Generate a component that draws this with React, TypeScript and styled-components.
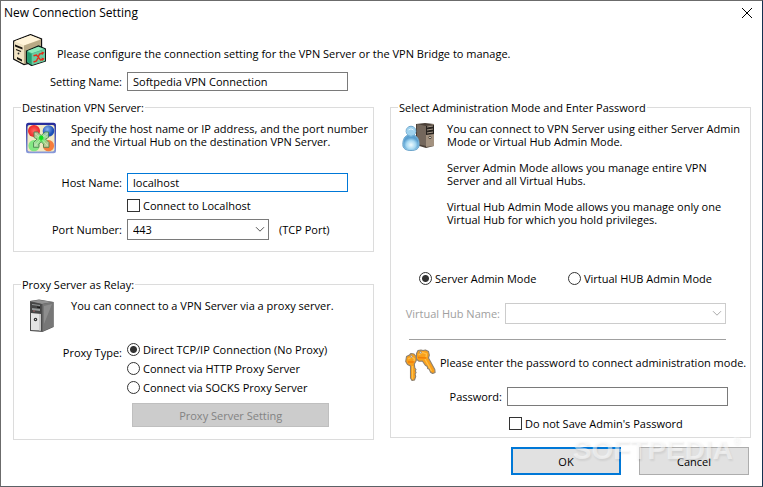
import React from "react";
import styled, { createGlobalStyle } from "styled-components";

const GlobalStyle = createGlobalStyle`
  *, *::before, *::after { box-sizing: border-box; }
  body { margin: 0; background: #fff; }
  body, input, select, button {
    font-family: "Open Sans", "Noto Sans", sans-serif;
    font-size: 11px;
    line-height: 13px;
    color: #000;
  }
`;

const Dialog = styled.main`
  display: flex;
  flex-direction: column;
  min-height: 100vh;
  background: #fff;
  border: 1px solid #6b6b6b;
  border-right-color: #14304f;
  border-bottom-color: #5c6166;
`;

const TitleBar = styled.header`
  display: flex;
  align-items: center;
  justify-content: space-between;
  height: 24px;
  padding: 0 9px 0 3px;
`;

const Title = styled.h1`
  margin: 0;
  font-size: 12px;
  line-height: 16px;
  font-weight: 400;
`;

const CloseButton = styled.button`
  display: flex;
  padding: 0;
  border: 0;
  background: none;
`;

const Intro = styled.div`
  display: flex;
  align-items: center;
  gap: 11px;
  height: 32px;
  margin: 9px 12px 0 12px;
  p { padding-top: 6px; }
`;

const Text = styled.p`
  margin: 0;
  white-space: pre-line;
`;

const FieldRow = styled.div<{ $label?: number; $top?: number; $right?: number }>`
  display: grid;
  grid-template-columns: ${(p) => p.$label ?? 108}px minmax(0, 1fr);
  column-gap: 5px;
  align-items: center;
  margin-top: ${(p) => p.$top ?? 0}px;
  padding-right: ${(p) => p.$right ?? 25}px;
`;

const FieldLabel = styled.label<{ $muted?: boolean }>`
  text-align: right;
  white-space: nowrap;
  color: ${(p) => (p.$muted ? "#a0a0a0" : "#000")};
`;

const TextBox = styled.input<{ $active?: boolean }>`
  width: 100%;
  height: 19px;
  padding: 0 5px;
  border: 1px solid ${(p) => (p.$active ? "#0078d7" : "#7a7a7a")};
  border-radius: 0;
  background: #fff;
  outline: none;
`;

const NameRow = styled(FieldRow)`
  width: 50%;
  margin-left: 13px;
`;

const Columns = styled.div`
  display: grid;
  grid-template-columns: minmax(0, 1fr) minmax(0, 1fr);
  gap: 16px;
  align-items: start;
  margin: 10px 11px 0 12px;
`;

const LeftColumn = styled.div`
  display: flex;
  flex-direction: column;
  gap: 26px;
`;

const Group = styled.fieldset<{ $bottom: number }>`
  min-width: 0;
  margin: 0;
  padding: 0 0 ${(p) => p.$bottom}px;
  border: 1px solid #dcdcdc;
`;

const Legend = styled.legend`
  margin-left: 7px;
  padding: 0 1px;
  line-height: 13px;
`;

const Description = styled.div<{ $height: number; $inset?: number }>`
  display: grid;
  grid-template-columns: 32px minmax(0, 1fr);
  column-gap: ${(p) => p.$inset ?? 13}px;
  min-height: ${(p) => p.$height}px;
  padding: 8px 0 0 11px;
`;

const Choice = styled.label`
  display: flex;
  align-items: center;
  gap: 3px;
  white-space: nowrap;
`;

const Tick = styled.input`
  appearance: none;
  flex: none;
  width: 13px;
  height: 13px;
  margin: 0;
  border: 1px solid #333;
  background: #fff;
`;

const Radio = styled(Tick)`
  border-radius: 50%;
  &:checked {
    background: radial-gradient(circle, #333 0 3px, #fff 4px);
  }
`;

const TickRow = styled.div<{ $indent: number; $top: number }>`
  display: flex;
  margin: ${(p) => p.$top}px 0 0 ${(p) => p.$indent}px;
`;

const PortLine = styled.div`
  display: flex;
  align-items: center;
  gap: 10px;
`;

const SelectFrame = styled.div<{ $wide?: boolean }>`
  position: relative;
  width: ${(p) => (p.$wide ? "100%" : "142px")};
  svg {
    position: absolute;
    right: 4px;
    top: 7px;
    pointer-events: none;
  }
`;

const Select = styled.select`
  display: block;
  appearance: none;
  width: 100%;
  height: 21px;
  padding: 0 20px 0 5px;
  border: 1px solid #7a7a7a;
  border-radius: 0;
  background: #fff;
  &:disabled {
    border-color: #ccc;
    opacity: 1;
  }
`;

const ProxyRow = styled(FieldRow)`
  align-items: start;
`;

const ProxyLabel = styled.span`
  padding-top: 3px;
  text-align: right;
`;

const RadioStack = styled.div`
  display: flex;
  flex-direction: column;
  gap: 6px;
`;

const SettingButton = styled.button`
  display: block;
  width: 55%;
  height: 24px;
  margin: 9px 0 0 118px;
  padding: 0;
  border: 1px solid #bfbfbf;
  background: #ccc;
  &:disabled { color: #838383; }
`;

const ModeRow = styled.div`
  display: grid;
  grid-template-columns: 149px auto;
  padding: 0 0 0 28px;
`;

const Divider = styled.hr`
  height: 1px;
  margin: 15px 24px 0 18px;
  border: 0;
  background: #a0a0a0;
`;

const KeyRow = styled.div`
  display: grid;
  grid-template-columns: 32px minmax(0, 1fr);
  column-gap: 3px;
  padding: 9px 0 0 14px;
  white-space: nowrap;
  p { padding-top: 7px; }
`;

const Footer = styled.footer`
  position: relative;
  display: flex;
  justify-content: flex-end;
  gap: 18px;
  margin-top: 7px;
  padding-right: 13px;
`;

const PushButton = styled.button<{ $primary?: boolean }>`
  width: 110px;
  height: 28px;
  padding: 0;
  border: ${(p) => (p.$primary ? "2px solid #0078d7" : "1px solid #adadad")};
  background: #e1e1e1;
`;

const Watermark = styled.span`
  position: absolute;
  right: 29px;
  top: -11px;
  font: 700 28px/28px "Liberation Sans", sans-serif;
  color: rgba(255, 255, 255, 0.5);
  text-shadow: 1px 2px 2px rgba(0, 0, 0, 0.07);
  pointer-events: none;
  sup {
    position: absolute;
    left: 100%;
    top: 0;
    font-size: 10px;
    line-height: 10px;
  }
`;

function Chevron({ color = "#555" }: { color?: string }) {
  return (
    <svg width="10" height="7" viewBox="0 0 10 7" fill="none" stroke={color} aria-hidden="true">
      <path d="M1 1.2 5 5.2 9 1.2" />
    </svg>
  );
}

function BridgeIcon() {
  return (
    <svg width="33" height="32" viewBox="0 0 33 32" aria-hidden="true">
      <path d="M.7 7 17.5.6 28.5 5v21L11 30.5.7 25Z" fill="#eee0bf" stroke="#111" strokeWidth="1.3" />
      <path d="M1.5 7.2 17.5 1.3 27.5 5.2 11 11.5Z" fill="#fff4d9" />
      <path d="M11 11.5 28 5.4V25L11 30Z" fill="#b9aa86" />
      <path d="M1.3 8 10.5 12v17.5L1.3 24.6Z" fill="#f2e5c5" />
      <path d="m2 10.5 7.5 3v2l-7.5-3ZM4 23l5 2.5v2L4 25Z" fill="#17130d" />
      <path d="m3 15.5 5 2" stroke="#17130d" strokeWidth="1.2" />
      <circle cx="5.5" cy="19.5" r=".9" fill="#222" />
      <path d="m13.5 17 12-5 7 3v12l-14 4.5-5-3Z" fill="#42b489" stroke="#101b17" strokeWidth="1.2" />
      <path d="m14.3 17 11-4.3 6 2.4-12.4 4.1Z" fill="#8deabb" />
      <path d="M19 19.5 32 15.5V27l-13 4Z" fill="#69cba0" />
      <path d="M14.3 18v9.8l4 2.5V20Z" fill="#249d70" />
      <path d="m20.5 21.8 3-.8 4 5 3-.8M20.5 28l3-1 3-7 3.5-.7" fill="none" stroke="#e52b18" strokeWidth="1.4" />
      <path d="m28.5 17.5 3 1-2.4 2.5ZM28.5 23.5l3 1-2.4 2.5Z" fill="#e52b18" />
    </svg>
  );
}

function HubIcon() {
  return (
    <svg width="32" height="32" viewBox="0 0 32 32" aria-hidden="true">
      <defs>
        <linearGradient id="hubEdge" x2="0" y2="1"><stop stopColor="#242999" /><stop offset="1" stopColor="#8a9bdb" /></linearGradient>
        <radialGradient id="hubRed"><stop stopColor="#ff6a64" /><stop offset="1" stopColor="#ee2427" /></radialGradient>
        <radialGradient id="hubBlue" cx=".4" cy=".35"><stop stopColor="#8ab4ee" /><stop offset="1" stopColor="#1c50b8" /></radialGradient>
        <radialGradient id="hubGreen"><stop stopColor="#14e020" /><stop offset=".45" stopColor="#7bdc7b" /><stop offset="1" stopColor="#b9dcae" /></radialGradient>
      </defs>
      <rect x="1" y=".7" width="30" height="30.5" rx="2.5" fill="url(#hubEdge)" />
      <rect x="2.5" y="3" width="27" height="26.5" rx="2" fill="#f2e9c4" />
      <circle cx="9" cy="9" r="6" fill="url(#hubRed)" />
      <circle cx="23.5" cy="9" r="5.8" fill="url(#hubBlue)" />
      <circle cx="9" cy="23.7" r="5.6" fill="#83e883" />
      <circle cx="23.5" cy="23.7" r="5.6" fill="#f67c3c" />
      <path
        d="M9 10h3.5l3.7 3.5L20 10h3.5v5.5L20.5 17l3.5 3.5v4.8h-5.5V22l-2.3-2-2.3 2v3.3H8.5v-4.8L12 17l-3-1.5Z"
        fill="url(#hubGreen)"
        fillOpacity=".82"
        stroke="#43824a"
        strokeWidth=".8"
      />
      <path d="m10 11.5 6.2 5 6.3-5M10 23.8l6.2-7.3 6.3 7.3" stroke="#d7f5cf" strokeOpacity=".6" fill="none" />
      <circle cx="16.2" cy="15.8" r="2.2" fill="#10df1d" />
    </svg>
  );
}

function TowerIcon() {
  return (
    <svg width="32" height="34" viewBox="0 0 32 34" aria-hidden="true">
      <path d="m5 2 9-1.4L28.7 3v25L17.4 33 5 32Z" fill="#555" />
      <path d="m5 2 9-1 14 2-11 2Z" fill="#929292" />
      <path d="m17.5 5 10.5-2v24.8l-10.5 4.7Z" fill="#777" />
      <path d="m19 7 8-2-8 20Z" fill="#8d8d8d" />
      <path d="M5.5 3 16.5 5v27l-11-1Z" fill="#454545" />
      <path d="m7 5 8 1v1L7 6Zm0 4 8 1v2l-8-1Z" fill="#959999" />
      <path d="m6 14 10 1v16.5L6 31Z" fill="#e4e4e4" />
      <path d="M14 15h2v16.5h-2Z" fill="#cacaca" />
      <circle cx="10.5" cy="20.5" r="1.2" fill="#eee" stroke="#333" strokeWidth="1.2" />
      <path d="m12 8 3 .5" stroke="#111" /><path d="M8 12h2" stroke="#a36565" />
    </svg>
  );
}

function AdminIcon() {
  return (
    <svg width="34" height="30" viewBox="0 0 34 30" aria-hidden="true">
      <defs>
        <radialGradient id="person" cy=".65"><stop stopColor="#f1fcff" /><stop offset=".6" stopColor="#a8d9f2" /><stop offset="1" stopColor="#5ba0d0" /></radialGradient>
      </defs>
      <path d="m14 2 9-1 9 1v22l-8 2-10-3Z" fill="#4b4038" />
      <path d="m15 2 9 2v20l-9-2Z" fill="#74675c" />
      <path d="m24 4 8-2v22l-8 1Z" fill="#a39280" />
      <path d="m24 4 8-1v9l-8 1Z" fill="#28231f" />
      <path d="m25 5 6-1m-6 4 6-1m-6 4 6-1" stroke="#a99b8c" />
      <circle cx="28" cy="15.5" r="1.2" fill="#f8f3e7" stroke="#4b4138" />
      <path d="M.8 22.5c0-5.5 2.2-8.5 5.2-9.5a4.9 4.9 0 1 1 6 0c3 1 5.2 4 5.2 9.5 0 4-2.8 6-8.2 6s-8.2-2-8.2-6Z" fill="#a8d9f2" stroke="#619cc5" strokeWidth=".9" />
      <circle cx="9" cy="9.5" r="4.5" fill="#9fd2ee" />
      <path d="M1.4 22.5C1.4 16.5 4 14 6.3 13.6q2.7 1.8 5.4 0c2.3.4 4.9 2.9 4.9 8.9 0 3.5-2.6 5.4-7.6 5.4s-7.6-1.9-7.6-5.4Z" fill="url(#person)" />
      <path d="M5.7 13.1q3.3 2.4 6.6 0" fill="none" stroke="#69aad2" strokeWidth=".9" />
      <path d="M6.5 8q2.5-2.4 5 0" fill="none" stroke="#dff4ff" />
    </svg>
  );
}

function KeysIcon() {
  return (
    <svg width="32" height="34" viewBox="0 0 32 34" aria-hidden="true">
      <g stroke="#8c8072" strokeWidth="1.1" strokeLinejoin="round" fill="#f9a01b">
        <path d="m11.5 4.5 1.5-3 3-.5 2 .5 2.500-.5 3 1.500.8 3.500-.8 3 6.300 11.500.3 3-2.500 1-2-1.200-1.300-3-1.700-.8-.3-2-2-1.200-3-4.300-3.500.2-2.500-2.200Z" />
        <path d="m1.500 7.500 3-1.500 1.500-1.500 3 .5 2 2.500.3 4-2 3.500.5 4 1.200 1.500-.8 1.500.9 1.500-1 1.500.6 2.500-1.200 3.500-2.500.5-1.500-2.500V17l-3-1.500-1.800-3Z" />
      </g>
      <path d="m13.500 6 4-2.500 4 1.500-.5 3M20 10l6.500 12M3 10l4-2 2.500 2-1 4M7.500 17v13" stroke="#ffc04a" strokeWidth="1.300" fill="none" />
      <path d="m13 8.500 8 .5M3 13h6.500" stroke="#f07e08" strokeWidth="1.600" />
      <circle cx="6.300" cy="7.500" r=".9" fill="#fff" stroke="#8c8072" strokeWidth=".8" />
      <circle cx="15.500" cy="3.300" r=".9" fill="#fff" stroke="#8c8072" strokeWidth=".8" />
    </svg>
  );
}

export default function App() {
  return (
    <>
      <GlobalStyle />
      <Dialog>
        <TitleBar>
          <Title>New Connection Setting</Title>
          <CloseButton type="button" aria-label="Close">
            <svg width="12" height="12" viewBox="0 0 12 12" stroke="#000" aria-hidden="true">
              <path d="m1 1 10 10M11 1 1 11" />
            </svg>
          </CloseButton>
        </TitleBar>
        <Intro>
          <BridgeIcon />
          <Text>Please configure the connection setting for the VPN Server or the VPN Bridge to manage.</Text>
        </Intro>
        <NameRow $top={6} $right={47}>
          <FieldLabel htmlFor="setting">Setting Name:</FieldLabel>
          <TextBox id="setting" defaultValue="Softpedia VPN Connection" />
        </NameRow>
        <Columns>
          <LeftColumn>
            <Group $bottom={11}>
              <Legend>Destination VPN Server:</Legend>
              <Description $height={59} $inset={14}>
                <HubIcon />
                <Text>{"Specify the host name or IP address, and the port number\nand the Virtual Hub on the destination VPN Server."}</Text>
              </Description>
              <FieldRow>
                <FieldLabel htmlFor="host">Host Name:</FieldLabel>
                <TextBox id="host" $active defaultValue="localhost" />
              </FieldRow>
              <TickRow $indent={113} $top={7}>
                <Choice><Tick type="checkbox" />Connect to Localhost</Choice>
              </TickRow>
              <FieldRow $top={7}>
                <FieldLabel htmlFor="port">Port Number:</FieldLabel>
                <PortLine>
                  <SelectFrame>
                    <Select id="port" defaultValue="443"><option>443</option></Select>
                    <Chevron />
                  </SelectFrame>
                  <span>(TCP Port)</span>
                </PortLine>
              </FieldRow>
            </Group>
            <Group $bottom={12}>
              <Legend>Proxy Server as Relay:</Legend>
              <Description $height={52} $inset={14}>
                <TowerIcon />
                <Text>You can connect to a VPN Server via a proxy server.</Text>
              </Description>
              <ProxyRow>
                <ProxyLabel id="proxy-type">Proxy Type:</ProxyLabel>
                <RadioStack role="radiogroup" aria-labelledby="proxy-type">
                  <Choice><Radio type="radio" name="proxy" defaultChecked />Direct TCP/IP Connection (No Proxy)</Choice>
                  <Choice><Radio type="radio" name="proxy" />Connect via HTTP Proxy Server</Choice>
                  <Choice><Radio type="radio" name="proxy" />Connect via SOCKS Proxy Server</Choice>
                </RadioStack>
              </ProxyRow>
              <SettingButton type="button" disabled>Proxy Server Setting</SettingButton>
            </Group>
          </LeftColumn>
          <Group $bottom={7}>
            <Legend>Select Administration Mode and Enter Password</Legend>
            <Description $height={158}>
              <AdminIcon />
              <Text>{"You can connect to VPN Server using either Server Admin\nMode or Virtual Hub Admin Mode.\n\nServer Admin Mode allows you manage entire VPN\nServer and all Virtual Hubs.\n\nVirtual Hub Admin Mode allows you manage only one\nVirtual Hub for which you hold privileges."}</Text>
            </Description>
            <ModeRow>
              <Choice><Radio type="radio" name="mode" defaultChecked />Server Admin Mode</Choice>
              <Choice><Radio type="radio" name="mode" />Virtual HUB Admin Mode</Choice>
            </ModeRow>
            <FieldRow $label={109} $top={18} $right={24}>
              <FieldLabel $muted htmlFor="hub">Virtual Hub Name:</FieldLabel>
              <SelectFrame $wide>
                <Select id="hub" disabled />
                <Chevron color="#aaa" />
              </SelectFrame>
            </FieldRow>
            <Divider />
            <KeyRow>
              <KeysIcon />
              <Text>Please enter the password to connect administration mode.</Text>
            </KeyRow>
            <FieldRow $label={111} $top={4} $right={22}>
              <FieldLabel htmlFor="password">Password:</FieldLabel>
              <TextBox id="password" type="password" />
            </FieldRow>
            <TickRow $indent={118} $top={11}>
              <Choice><Tick type="checkbox" />Do not Save Admin's Password</Choice>
            </TickRow>
          </Group>
        </Columns>
        <Footer>
          <PushButton type="button" $primary>OK</PushButton>
          <PushButton type="button">Cancel</PushButton>
          <Watermark>SOFTPEDIA<sup>®</sup></Watermark>
        </Footer>
      </Dialog>
    </>
  );
}
